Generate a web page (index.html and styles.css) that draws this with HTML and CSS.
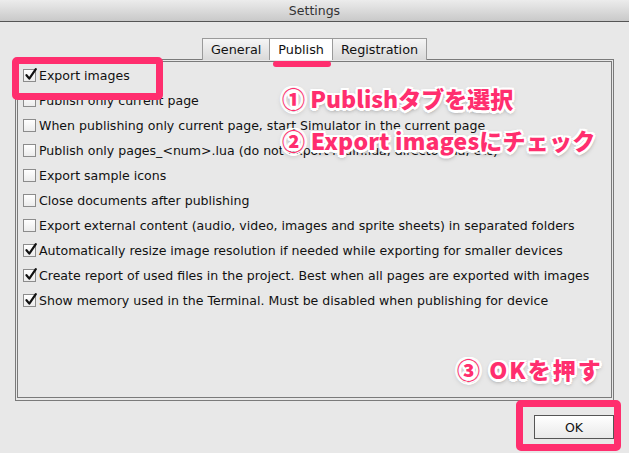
FILE: index.html
```html
<!DOCTYPE html>
<html>
<head>
<meta charset="utf-8">
<link rel="stylesheet" href="styles.css">
</head>
<body>
<div class="window">
  <div class="titlebar">Settings</div>
  <div class="tabs">
    <div class="tab">General</div>
    <div class="tab active">Publish</div>
    <div class="tab">Registration</div>
  </div>
  <div class="panel">
    <div class="panel-inner">
      <div class="row"><span class="cb on"><svg viewBox="0 0 14 14" width="14" height="14"><path d="M2.5 7.2 L5.3 10.6 L11.8 1.2" fill="none" stroke="#111" stroke-width="2.2" stroke-linejoin="round" stroke-linecap="round"/></svg></span><span class="lbl">Export images</span></div>
      <div class="row"><span class="cb"></span><span class="lbl">Publish only current page</span></div>
      <div class="row"><span class="cb"></span><span class="lbl">When publishing only current page, start Simulator in the current page</span></div>
      <div class="row"><span class="cb"></span><span class="lbl">Publish only pages_&lt;num&gt;.lua (do not export main.lua, director.lua, etc)</span></div>
      <div class="row"><span class="cb"></span><span class="lbl">Export sample icons</span></div>
      <div class="row"><span class="cb"></span><span class="lbl">Close documents after publishing</span></div>
      <div class="row"><span class="cb"></span><span class="lbl">Export external content (audio, video, images and sprite sheets) in separated folders</span></div>
      <div class="row"><span class="cb on"><svg viewBox="0 0 14 14" width="14" height="14"><path d="M2.5 7.2 L5.3 10.6 L11.8 1.2" fill="none" stroke="#111" stroke-width="2.2" stroke-linejoin="round" stroke-linecap="round"/></svg></span><span class="lbl">Automatically resize image resolution if needed while exporting for smaller devices</span></div>
      <div class="row"><span class="cb on"><svg viewBox="0 0 14 14" width="14" height="14"><path d="M2.5 7.2 L5.3 10.6 L11.8 1.2" fill="none" stroke="#111" stroke-width="2.2" stroke-linejoin="round" stroke-linecap="round"/></svg></span><span class="lbl">Create report of used files in the project. Best when all pages are exported with images</span></div>
      <div class="row"><span class="cb on"><svg viewBox="0 0 14 14" width="14" height="14"><path d="M2.5 7.2 L5.3 10.6 L11.8 1.2" fill="none" stroke="#111" stroke-width="2.2" stroke-linejoin="round" stroke-linecap="round"/></svg></span><span class="lbl">Show memory used in the Terminal. Must be disabled when publishing for device</span></div>
    </div>
  </div>
  <div class="footer">
    <button class="ok">OK</button>
  </div>

  <div class="hl hl-export"></div>
  <div class="hl hl-ok"></div>
  <div class="tab-underline"></div>
  <div class="note note1">① Publishタブを選択</div>
  <div class="note note2">② Export imagesにチェック</div>
  <div class="note note3">③ OKを押す</div>
</div>
</body>
</html>
```
FILE: styles.css
```css
html, body {
  margin: 0;
  padding: 0;
}
body {
  background: #e8e8e8;
  font-family: "DejaVu Sans", "Liberation Sans", sans-serif;
  color: #111;
  width: 629px;
  height: 453px;
  overflow: hidden;
}
.window {
  position: relative;
  width: 629px;
  height: 453px;
}
.titlebar {
  height: 21px;
  line-height: 22px;
  text-align: center;
  font-size: 12.5px;
  color: #333;
  background: linear-gradient(#ececec, #c9c9c9);
  border-bottom: 1px solid #555;
}
.tabs {
  display: flex;
  justify-content: center;
  margin-top: 16px;
  padding-left: 1px;
  position: relative;
  z-index: 1;
}
.tab {
  height: 21px;
  line-height: 22px;
  font-size: 12.8px;
  padding: 0 8px;
  border: 1px solid #9a9a9a;
  border-bottom: none;
  background: linear-gradient(#f5f5f5, #d9d9d9);
  margin-left: -1px;
}
.tab.active {
  background: #fff;
}
.panel {
  margin: 0 15px;
  height: 338px;
  border: 1px solid #7a7a7a;
  padding: 1px;
  margin-top: -1px;
}
.panel-inner {
  height: 334px;
  border: 1px solid #7a7a7a;
  padding: 1px 0 0 5px;
}
.row {
  height: 25px;
  display: flex;
  align-items: center;
  gap: 3px;
}
.cb {
  position: relative;
  width: 11px;
  height: 11px;
  border: 1px solid #8c8c8c;
  background: linear-gradient(#ffffff, #ececec);
  flex: none;
}
.cb svg {
  position: absolute;
  left: 0;
  top: -2px;
}
.lbl {
  font-size: 12.55px;
  white-space: nowrap;
}
.footer {
  display: flex;
  justify-content: flex-end;
  padding: 14px 15px 0 0;
}
.ok {
  width: 80px;
  height: 24px;
  font-family: "DejaVu Sans", sans-serif;
  font-size: 12.5px;
  color: #111;
  border: 1px solid #555;
  background: linear-gradient(#ffffff, #e9e9e9);
  border-radius: 0;
  padding: 0;
}
.hl {
  position: absolute;
  border: 7px solid #ff2e6e;
  border-radius: 5px;
  box-sizing: border-box;
}
.hl-export {
  left: 12px;
  top: 57px;
  width: 151px;
  height: 43px;
}
.hl-ok {
  left: 516px;
  top: 400px;
  width: 105px;
  height: 51px;
}
.tab-underline {
  position: absolute;
  left: 273px;
  top: 61px;
  width: 58px;
  height: 6px;
  border-radius: 3px;
  background: #ff2e6e;
}
.note {
  position: absolute;
  font-family: "Noto Sans CJK JP", sans-serif;
  font-weight: 900;
  font-size: 23px;
  line-height: 26px;
  color: #ff2e6e;
  white-space: nowrap;
  text-shadow:
    2.5px 0 0 #fff, -2.5px 0 0 #fff, 0 2.5px 0 #fff, 0 -2.5px 0 #fff,
    1.8px 1.8px 0 #fff, -1.8px 1.8px 0 #fff, 1.8px -1.8px 0 #fff, -1.8px -1.8px 0 #fff,
    0 2px 5px rgba(0,0,0,0.6);
}
.note1 { left: 282px; top: 85px; }
.note2 { left: 282px; top: 127px; letter-spacing: 0.2px; }
.note3 { left: 457px; top: 356px; letter-spacing: 2px; }
```
